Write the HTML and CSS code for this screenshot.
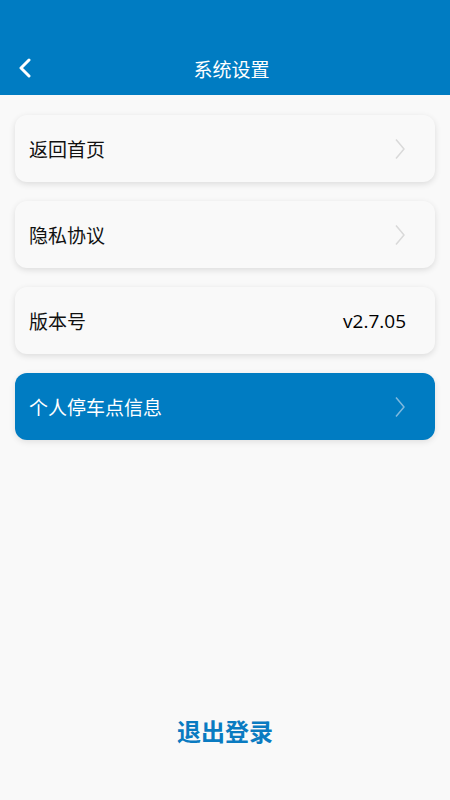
FILE: index.html
```html
<!DOCTYPE html>
<html lang="zh">
<head>
<meta charset="utf-8">
<link rel="stylesheet" href="styles.css">
</head>
<body>
<div class="page">
  <header class="header">
    <div class="back">
      <svg width="16" height="20" viewBox="0 0 16 20"><path d="M12 2 L4 10 L12 18" fill="none" stroke="#fff" stroke-width="3" stroke-linecap="round" stroke-linejoin="round"/></svg>
    </div>
    <div class="title">系统设置</div>
  </header>
  <main class="list">
    <div class="card">
      <span class="label">返回首页</span>
      <svg class="chev" width="12" height="22" viewBox="0 0 12 22"><path d="M2 1.5 L10 11 L2 20.5" fill="none" stroke="#d9d9d9" stroke-width="1.5" stroke-linejoin="round"/></svg>
    </div>
    <div class="card">
      <span class="label">隐私协议</span>
      <svg class="chev" width="12" height="22" viewBox="0 0 12 22"><path d="M2 1.5 L10 11 L2 20.5" fill="none" stroke="#d9d9d9" stroke-width="1.5" stroke-linejoin="round"/></svg>
    </div>
    <div class="card">
      <span class="label">版本号</span>
      <span class="version">v2.7.05</span>
    </div>
    <div class="card primary">
      <span class="label">个人停车点信息</span>
      <svg class="chev" width="12" height="22" viewBox="0 0 12 22"><path d="M2 1.5 L10 11 L2 20.5" fill="none" stroke="#7fb9de" stroke-width="1.5" stroke-linejoin="round"/></svg>
    </div>
  </main>
  <div class="logout">退出登录</div>
</div>
</body>
</html>
```
FILE: styles.css
```css
html, body {
  margin: 0;
  padding: 0;
  background: #f9f9f9;
}
body {
  font-family: "Noto Sans CJK SC", "Noto Sans", sans-serif;
}
.page {
  width: 450px;
  height: 800px;
  display: flex;
  flex-direction: column;
}
.header {
  height: 95px;
  background: #007cc2;
  display: flex;
  align-items: flex-end;
  padding: 0 0 13px 13px;
  box-sizing: border-box;
  position: relative;
}
.back {
  position: absolute;
  left: 17px;
  bottom: 17px;
  width: 16px;
  height: 20px;
  display: flex;
}
.title {
  flex: 1;
  text-align: center;
  color: #fff;
  font-size: 19px;
  line-height: 26px;
}
.list {
  display: flex;
  flex-direction: column;
  gap: 19px;
  padding: 20px 15px 0;
}
.card {
  height: 67px;
  background: #f9f9f9;
  border-radius: 12px;
  box-shadow: 0 2px 6px rgba(0,0,0,0.12);
  display: flex;
  align-items: center;
  justify-content: space-between;
  padding: 0 29px 0 14px;
  box-sizing: border-box;
}
.label {
  font-size: 19px;
  color: #111;
}
.version {
  font-family: "Open Sans", "Noto Sans", sans-serif;
  font-size: 19px;
  color: #000;
  margin-right: 0;
}
.chev {
  display: block;
}
.primary {
  background: #007cc2;
  box-shadow: 0 2px 6px rgba(0,0,0,0.10);
}
.primary .label {
  color: #fff;
}
.logout {
  margin-top: auto;
  margin-bottom: 52px;
  text-align: center;
  color: #0a7bc1;
  font-size: 24px;
  font-weight: 700;
}
```
